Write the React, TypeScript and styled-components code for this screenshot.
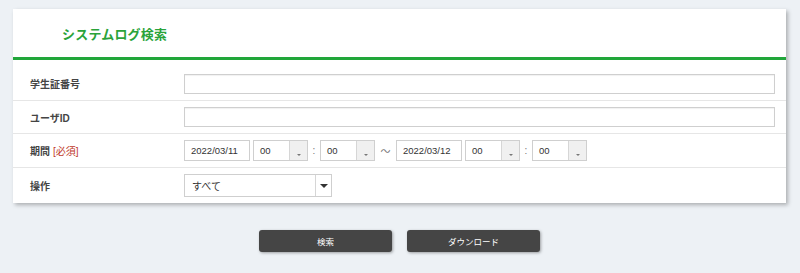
import React from 'react';
import styled, { createGlobalStyle } from 'styled-components';

const GlobalStyle = createGlobalStyle`
  html, body {
    margin: 0;
    background: #edf1f5;
    font-family: 'Liberation Sans', 'Noto Sans CJK JP', sans-serif;
  }
`;

const Page = styled.div`
  padding: 9px 14px 20px 13px;
`;

const Card = styled.div`
  background: #fff;
  box-shadow: 2px 2px 4px rgba(0, 0, 0, 0.28);
`;

const Header = styled.div`
  height: 48px;
  display: flex;
  align-items: center;
  padding-left: 49px;
  border-bottom: 3px solid #21a63a;
`;

const Title = styled.h1`
  margin: 0;
  font-size: 13px;
  font-weight: bold;
  color: #2aa33a;
  letter-spacing: 0.2px;
`;

const FormBody = styled.div`
  padding-top: 7px;
`;

const Row = styled.div<{ $h?: number }>`
  box-sizing: border-box;
  min-height: ${({ $h }) => $h ?? 33}px;
  display: grid;
  grid-template-columns: 171px 1fr;
  align-items: center;
  padding: 6px 11px 6px 0;
  & + & {
    border-top: 1px solid #e6e6e6;
  }
`;

const Label = styled.div`
  padding-left: 17px;
  font-size: 10px;
  font-weight: bold;
  color: #444;
`;

const Required = styled.span`
  color: #c0392b;
  font-weight: normal;
  margin-left: 3px;
`;

const TextInput = styled.input`
  box-sizing: border-box;
  width: 100%;
  height: 20px;
  border: 1px solid #cfcfcf;
  box-shadow: inset 0 1px 1px rgba(0, 0, 0, 0.06);
  font: inherit;
  font-size: 10px;
  padding: 0 6px;
`;

const Inline = styled.div`
  display: flex;
  align-items: center;
`;

const DateBox = styled.div`
  box-sizing: border-box;
  width: 66px;
  height: 21px;
  border: 1px solid #cfcfcf;
  font-size: 9.5px;
  color: #333;
  display: flex;
  align-items: center;
  padding-left: 6px;
  margin-right: 3px;
`;

const TimeSelect = styled.div`
  box-sizing: border-box;
  width: 55px;
  height: 21px;
  border: 1px solid #cfcfcf;
  display: flex;
  font-size: 9.5px;
  color: #333;
`;

const TimeValue = styled.div`
  flex: 1;
  display: flex;
  align-items: center;
  padding-left: 6px;
`;

const TimeArrow = styled.div`
  width: 18px;
  background: #f0f0f0;
  border-left: 1px solid #d6d6d6;
  display: flex;
  justify-content: center;
  align-items: flex-end;
  padding-bottom: 4px;
  box-sizing: border-box;
`;

const SmallTriangle = styled.span`
  width: 0;
  height: 0;
  border-left: 2.5px solid transparent;
  border-right: 2.5px solid transparent;
  border-top: 2.5px solid #777;
`;

const Sep = styled.span<{ $w: number }>`
  width: ${({ $w }) => $w}px;
  text-align: center;
  font-size: 10px;
  color: #777;
`;

const OpSelect = styled.div`
  box-sizing: border-box;
  width: 148px;
  height: 23px;
  border: 1px solid #cfcfcf;
  display: flex;
  font-size: 10px;
  color: #333;
`;

const OpValue = styled.div`
  flex: 1;
  display: flex;
  align-items: center;
  padding-left: 7px;
`;

const OpArrow = styled.div`
  width: 15px;
  border-left: 1px solid #d6d6d6;
  display: flex;
  align-items: center;
  justify-content: center;
`;

const BigTriangle = styled.span`
  width: 0;
  height: 0;
  border-left: 4px solid transparent;
  border-right: 4px solid transparent;
  border-top: 4px solid #333;
`;

const Buttons = styled.div`
  display: flex;
  justify-content: center;
  gap: 15px;
  margin-top: 27px;
`;

const Button = styled.button`
  width: 133px;
  height: 22px;
  border: none;
  border-radius: 3px;
  background: #454545;
  color: #fff;
  font-family: inherit;
  font-size: 8.5px;
  box-shadow: 1px 1px 3px rgba(0, 0, 0, 0.35);
`;

const Time = ({ value }: { value: string }) => (
  <TimeSelect>
    <TimeValue>{value}</TimeValue>
    <TimeArrow>
      <SmallTriangle />
    </TimeArrow>
  </TimeSelect>
);

const App = () => {
  return (
    <Page>
      <GlobalStyle />
      <Card>
        <Header>
          <Title>システムログ検索</Title>
        </Header>
        <FormBody>
          <Row>
            <Label>学生証番号</Label>
            <TextInput />
          </Row>
          <Row>
            <Label>ユーザID</Label>
            <TextInput />
          </Row>
          <Row $h={34}>
            <Label>
              期間<Required>[必須]</Required>
            </Label>
            <Inline>
              <DateBox>2022/03/11</DateBox>
              <Time value='00' />
              <Sep $w={12}>:</Sep>
              <Time value='00' />
              <Sep $w={21}>～</Sep>
              <DateBox>2022/03/12</DateBox>
              <Time value='00' />
              <Sep $w={12}>:</Sep>
              <Time value='00' />
            </Inline>
          </Row>
          <Row $h={35}>
            <Label>操作</Label>
            <Inline>
              <OpSelect>
                <OpValue>すべて</OpValue>
                <OpArrow>
                  <BigTriangle />
                </OpArrow>
              </OpSelect>
            </Inline>
          </Row>
        </FormBody>
      </Card>
      <Buttons>
        <Button>検索</Button>
        <Button>ダウンロード</Button>
      </Buttons>
    </Page>
  );
};

export default App;
